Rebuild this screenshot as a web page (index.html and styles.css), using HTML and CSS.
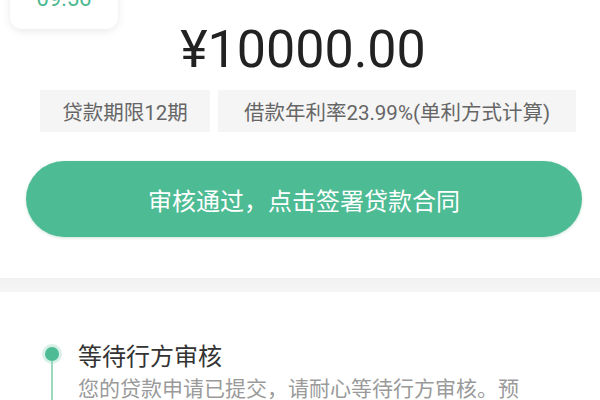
FILE: index.html
```html
<!DOCTYPE html>
<html lang="zh-CN">
<head>
<meta charset="utf-8">
<link rel="stylesheet" href="styles.css">
</head>
<body>
<div class="page">
  <section class="top">
    <div class="time-card"><span class="time">09:56</span></div>
    <div class="amount">¥10000.00</div>
    <div class="tags">
      <div class="tag tag-term">贷款期限12期</div>
      <div class="tag tag-wide">借款年利率23.99%(单利方式计算)</div>
    </div>
    <div class="btn">审核通过，点击签署贷款合同</div>
  </section>
  <div class="band"></div>
  <section class="timeline">
    <div class="step">
      <div class="rail"><span class="dot"></span><span class="line"></span></div>
      <div class="step-body">
        <div class="step-title">等待行方审核</div>
        <div class="step-desc">您的贷款申请已提交，请耐心等待行方审核。预</div>
      </div>
    </div>
  </section>
</div>
</body>
</html>
```

FILE: styles.css
```css
html, body {
  margin: 0;
  padding: 0;
  background: #ffffff;
}
body {
  font-family: Roboto, "Noto Sans CJK SC", sans-serif;
  width: 600px;
  height: 400px;
  overflow: hidden;
}
.page {
  display: flex;
  flex-direction: column;
}
.top {
  display: flex;
  flex-direction: column;
  height: 278px;
}
.time-card {
  width: 108px;
  height: 50px;
  margin-top: -21px;
  margin-left: 10px;
  border-radius: 12px;
  background: #fff;
  box-shadow: 0 2px 8px rgba(0, 0, 0, 0.09);
  display: flex;
  justify-content: center;
  align-items: flex-end;
  box-sizing: border-box;
  padding-bottom: 19px;
}
.time {
  font-size: 22px;
  line-height: 22px;
  color: #4cb990;
}
.amount {
  margin-top: -7px;
  text-align: center;
  font-size: 52px;
  line-height: 56px;
  color: #222;
  padding-left: 6px;
}
.tags {
  display: flex;
  gap: 8px;
  margin-top: 12px;
  padding-left: 40px;
}
.tag {
  height: 42px;
  display: flex;
  align-items: center;
  justify-content: center;
  box-sizing: border-box;
  background: #f5f5f5;
  color: #666;
  font-size: 20.5px;
}
.tag-term {
  width: 170px;
}
.tag-wide {
  width: 358px;
}
.btn {
  margin: 29px 18px 0 26px;
  height: 76px;
  border-radius: 38px;
  background: #4dbb93;
  color: #fff;
  font-size: 24px;
  display: flex;
  align-items: center;
  justify-content: center;
  box-shadow: 0 1px 3px rgba(60, 140, 110, 0.25);
}
.band {
  height: 14px;
  background: linear-gradient(#f1f1f1, #f6f6f6);
}
.timeline {
  padding: 50px 0 0 45px;
}
.step {
  display: flex;
  gap: 19px;
}
.rail {
  width: 14px;
  display: flex;
  flex-direction: column;
  align-items: center;
  padding-top: 5px;
}
.dot {
  width: 14px;
  height: 14px;
  border-radius: 50%;
  background: #4dbb93;
  box-shadow: 0 0 0 3px rgba(77, 187, 147, 0.22);
  flex: none;
}
.line {
  width: 2px;
  flex: 1;
  background: #9ad8c0;
}
.step-body {
  display: flex;
  flex-direction: column;
}
.step-title {
  font-size: 24px;
  line-height: 30px;
  color: #333;
}
.step-desc {
  margin-top: 3px;
  font-size: 21px;
  line-height: 28px;
  color: #9a9a9a;
}
```
